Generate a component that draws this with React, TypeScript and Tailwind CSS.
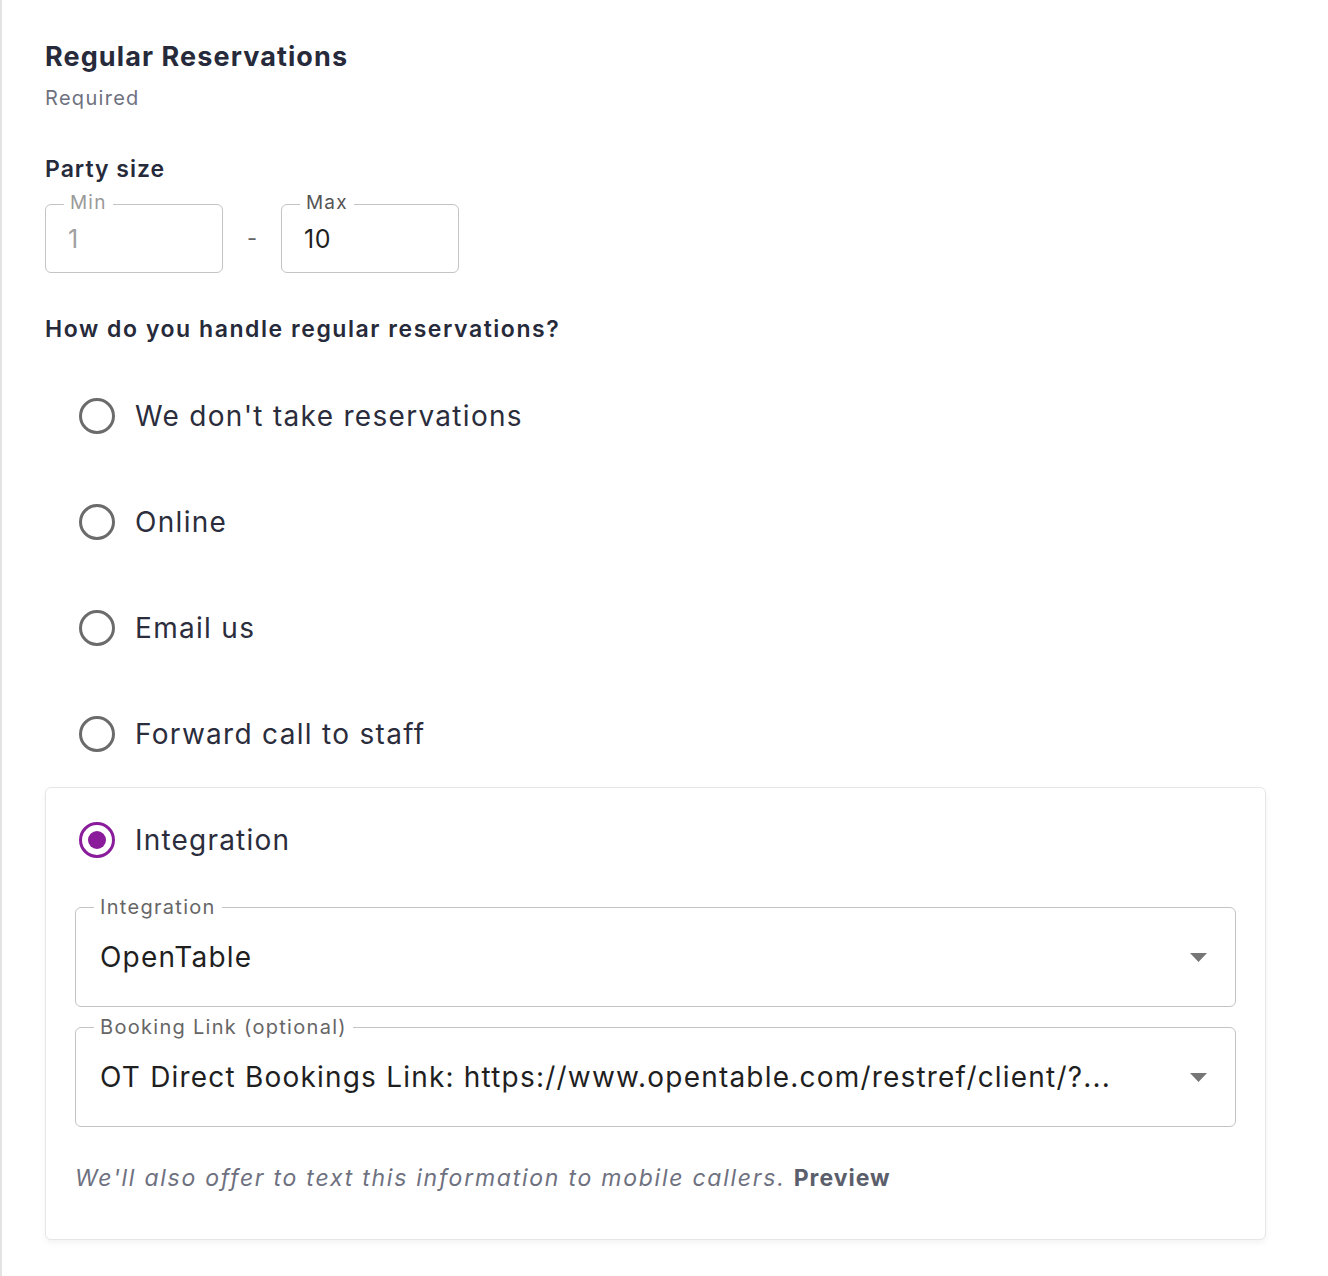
import React from "react";

function Radio({ checked }: { checked?: boolean }) {
  if (checked) {
    return (
      <span className="flex h-[36px] w-[36px] shrink-0 items-center justify-center rounded-full border-[3.5px] border-[#8a1c9c]">
        <span className="h-[18px] w-[18px] rounded-full bg-[#8a1c9c]" />
      </span>
    );
  }
  return <span className="h-[36px] w-[36px] shrink-0 rounded-full border-[3.5px] border-[#6b6b6b]" />;
}

function RadioRow({ label, checked }: { label: string; checked?: boolean }) {
  return (
    <div className="flex h-[106px] items-center gap-[20px] pl-[34px]">
      <Radio checked={checked} />
      <span className="text-[28px] leading-[34px] tracking-[1.3px] text-[#2b2d3c]">{label}</span>
    </div>
  );
}

function Caret() {
  return (
    <svg width="17" height="9" viewBox="0 0 17 9" className="shrink-0">
      <path d="M0 0 L17 0 L8.5 9 Z" fill="#767676" />
    </svg>
  );
}

function SelectField({ label, value }: { label: string; value: string }) {
  return (
    <div className="relative flex h-[100px] items-center rounded-[6px] border border-[#c4c4c4] pl-[24px] pr-[28px]">
      <span className="absolute left-[18px] top-[-14px] bg-white px-[6px] text-[20px] leading-[26px] tracking-[1.3px] text-[#666666]">
        {label}
      </span>
      <span className="flex-1 truncate text-[28px] leading-[34px] tracking-[1.2px] text-[#1f1f1f]">{value}</span>
      <Caret />
    </div>
  );
}

function NumberBox({ label, value, muted }: { label: string; value: string; muted?: boolean }) {
  return (
    <div className="relative flex h-[69px] w-[178px] items-center rounded-[6px] border border-[#c4c4c4] pl-[22px]">
      <span
        className={`absolute left-[18px] top-[-14px] bg-white px-[6px] text-[19px] leading-[24px] tracking-[1.2px] ${
          muted ? "text-[#9a9a9a]" : "text-[#555555]"
        }`}
      >
        {label}
      </span>
      <span className={`text-[25px] leading-[30px] tracking-[0.5px] ${muted ? "text-[#a0a0a0]" : "text-[#1f1f1f]"}`}>
        {value}
      </span>
    </div>
  );
}

export default function App() {
  return (
    <div
      className="min-h-[1276px] border-l-2 border-[#e3e3e3] bg-white pl-[43px] pr-[62px] pt-[41px]"
      style={{ fontFamily: "Inter, 'Noto Sans', sans-serif" }}
    >
      <h1 className="text-[27px] font-bold leading-[32px] tracking-[1.1px] text-[#262a3a]">Regular Reservations</h1>
      <div className="mt-[11px] text-[20px] leading-[28px] tracking-[1.3px] text-[#6e7180]">Required</div>

      <div className="mt-[42px] text-[23px] font-semibold leading-[30px] tracking-[1px] text-[#262a3a]">Party size</div>
      <div className="mt-[20px] flex items-center">
        <NumberBox label="Min" value="1" muted />
        <span className="w-[58px] text-center text-[22px] text-[#666]">-</span>
        <NumberBox label="Max" value="10" />
      </div>

      <div className="mt-[42px] text-[23px] font-semibold leading-[28px] tracking-[1.55px] text-[#262a3a]">
        How do you handle regular reservations?
      </div>

      <div className="mt-[20px]">
        <RadioRow label="We don't take reservations" />
        <RadioRow label="Online" />
        <RadioRow label="Email us" />
        <RadioRow label="Forward call to staff" />
      </div>

      <div className="rounded-[6px] border border-[#e6e6e6] bg-white shadow-[0_3px_6px_rgba(0,0,0,0.05)]">
        <div className="flex h-[104px] items-center gap-[20px] pl-[33px]">
          <Radio checked />
          <span className="text-[28px] leading-[34px] tracking-[1.2px] text-[#2b2d3c]">Integration</span>
        </div>
        <div className="mt-[15px] flex flex-col gap-[20px] px-[29px]">
          <SelectField label="Integration" value="OpenTable" />
          <SelectField
            label="Booking Link (optional)"
            value="OT Direct Bookings Link: https://www.opentable.com/restref/client/?..."
          />
        </div>
        <div className="mt-[36px] pb-[46px] pl-[29px] text-[23px] leading-[30px] tracking-[1.75px] text-[#6e7180]">
          <span className="italic">We'll also offer to text this information to mobile callers.</span>{" "}
          <span className="font-bold tracking-[1px] text-[#5b5e6b]">Preview</span>
        </div>
      </div>
    </div>
  );
}
